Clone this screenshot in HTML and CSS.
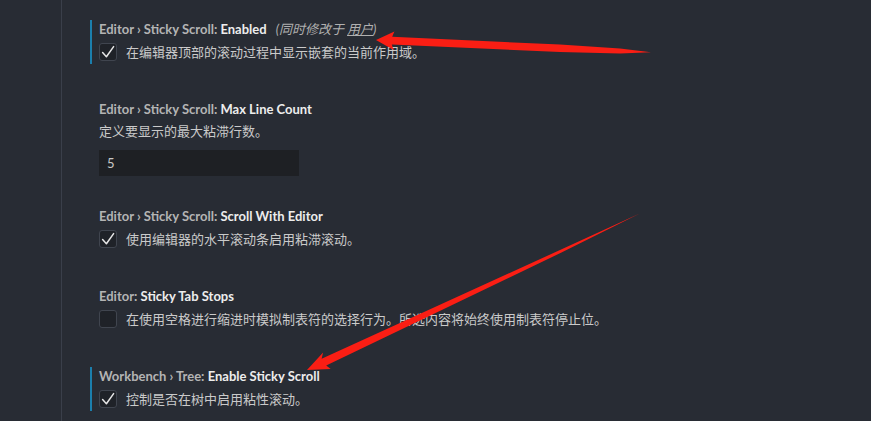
FILE: index.html
```html
<!DOCTYPE html>
<html lang="zh">
<head>
<meta charset="utf-8">
<title>Settings</title>
<link rel="stylesheet" href="styles.css">
</head>
<body>
<div class="app">
  <div class="sidebar"></div>
  <div class="content">
    <div class="setting modified">
      <div class="title"><span class="cat">Editor › Sticky Scroll: </span><span class="name">Enabled</span><span class="also">(同时修改于 <span class="link">用户</span>)</span></div>
      <div class="row"><span class="checkbox checked"><svg viewBox="0 0 18 18" width="18" height="18"><polyline points="3.6,9.6 7.4,13.8 14.6,3.6" fill="none" stroke="#e6e6e6" stroke-width="1.5" stroke-linecap="round" stroke-linejoin="round"/></svg></span><span class="desc">在编辑器顶部的滚动过程中显示嵌套的当前作用域。</span></div>
    </div>
    <div class="setting number">
      <div class="title"><span class="cat">Editor › Sticky Scroll: </span><span class="name">Max Line Count</span></div>
      <div class="desc plain">定义要显示的最大粘滞行数。</div>
      <div class="input">5</div>
    </div>
    <div class="setting">
      <div class="title"><span class="cat">Editor › Sticky Scroll: </span><span class="name">Scroll With Editor</span></div>
      <div class="row"><span class="checkbox checked"><svg viewBox="0 0 18 18" width="18" height="18"><polyline points="3.6,9.6 7.4,13.8 14.6,3.6" fill="none" stroke="#e6e6e6" stroke-width="1.5" stroke-linecap="round" stroke-linejoin="round"/></svg></span><span class="desc">使用编辑器的水平滚动条启用粘滞滚动。</span></div>
    </div>
    <div class="setting">
      <div class="title"><span class="cat">Editor: </span><span class="name">Sticky Tab Stops</span></div>
      <div class="row"><span class="checkbox"></span><span class="desc">在使用空格进行缩进时模拟制表符的选择行为。所选内容将始终使用制表符停止位。</span></div>
    </div>
    <div class="setting modified">
      <div class="title"><span class="cat">Workbench › Tree: </span><span class="name">Enable Sticky Scroll</span></div>
      <div class="row"><span class="checkbox checked"><svg viewBox="0 0 18 18" width="18" height="18"><polyline points="3.6,9.6 7.4,13.8 14.6,3.6" fill="none" stroke="#e6e6e6" stroke-width="1.5" stroke-linecap="round" stroke-linejoin="round"/></svg></span><span class="desc">控制是否在树中启用粘性滚动。</span></div>
    </div>
  </div>
</div>
<svg class="annotations" width="871" height="421" viewBox="0 0 871 421">
  <polygon fill="#fa1e14" points="376,40 394.4,31.6 392.2,36.8 560,44.6 620,48.4 651,52.3 620,53.4 560,52 391.8,44.6 393.6,50"/>
  <polygon fill="#fa1e14" points="307,370 323.1,352.5 321.6,358.8 560,250 640.3,213.2 561.5,252.5 326.2,365.5 330.7,369"/>
</svg>
</body>
</html>
```

FILE: styles.css
```css
html, body {
  margin: 0;
  padding: 0;
  background: #282c34;
  overflow: hidden;
}
body {
  width: 871px;
  height: 421px;
  position: relative;
  font-family: Lato, "Noto Sans CJK SC", sans-serif;
  font-size: 13px;
  color: #c2c2c2;
}
.app {
  display: flex;
  height: 421px;
}
.sidebar {
  width: 61px;
  border-right: 1px solid #3a3f4a;
  flex: none;
}
.content {
  padding: 20px 0 0 28px;
  display: flex;
  flex-direction: column;
}
.setting {
  border-left: 2px solid transparent;
  padding: 0 0 3px 7px;
  margin-bottom: 36px;
}
.setting.modified {
  border-left-color: #1b7fad;
}
.setting.number {
  margin-bottom: 28px;
}
.title {
  line-height: 18px;
  height: 18px;
  white-space: nowrap;
}
.cat {
  font-weight: 700;
  color: #b4b4b4;
}
.name {
  font-weight: 700;
  color: #ededed;
}
.also {
  font-style: italic;
  color: #b0b0b0;
  margin-left: 9px;
}
.link {
  text-decoration: underline;
}
.row {
  display: flex;
  align-items: center;
  margin-top: 5px;
  height: 18px;
}
.checkbox {
  width: 16px;
  height: 16px;
  border: 1px solid #40454f;
  border-radius: 3px;
  background: #1f2228;
  display: flex;
  flex: none;
  position: relative;
}
.checkbox svg {
  position: absolute;
  left: -1px;
  top: -1px;
}
.desc {
  margin-left: 9px;
  line-height: 18px;
  color: #cacaca;
  white-space: nowrap;
}
.desc.plain {
  margin-left: 0;
  margin-top: 4px;
}
.input {
  margin-top: 10px;
  width: 192px;
  height: 26px;
  line-height: 26px;
  padding-left: 8px;
  background: #1e2024;
  color: #c8c8c8;
}
.annotations {
  position: absolute;
  left: 0;
  top: 0;
  pointer-events: none;
}
```
